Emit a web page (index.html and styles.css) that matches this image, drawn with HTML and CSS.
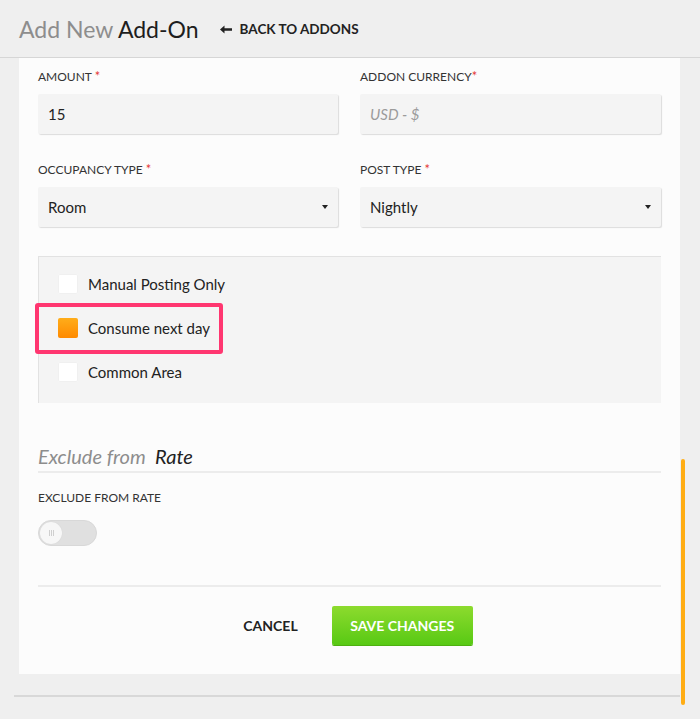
FILE: index.html
```html
<!DOCTYPE html>
<html>
<head>
<meta charset="utf-8">
<link rel="stylesheet" href="styles.css">
</head>
<body>
<header class="topbar">
  <h1 class="title"><span class="muted">Add New</span> Add-On</h1>
  <a class="back"><svg class="arrow" width="12" height="9" viewBox="0 0 12 9"><path d="M0 4.5 L4.5 0.5 L4.5 3.2 L12 3.2 L12 5.8 L4.5 5.8 L4.5 8.5 Z" fill="#222"/></svg>BACK TO ADDONS</a>
</header>
<main class="card">
  <div class="grid">
    <div class="field">
      <label class="lbl">AMOUNT <span class="req">*</span></label>
      <div class="input">15</div>
    </div>
    <div class="field">
      <label class="lbl">ADDON CURRENCY<span class="req">*</span></label>
      <div class="input placeholder">USD - $</div>
    </div>
    <div class="field">
      <label class="lbl">OCCUPANCY TYPE <span class="req">*</span></label>
      <div class="input select">Room<span class="caret"></span></div>
    </div>
    <div class="field">
      <label class="lbl">POST TYPE <span class="req">*</span></label>
      <div class="input select">Nightly<span class="caret"></span></div>
    </div>
  </div>
  <div class="checks">
    <div class="check"><span class="box"></span>Manual Posting Only</div>
    <div class="check highlight"><span class="box on"></span>Consume next day</div>
    <div class="check"><span class="box"></span>Common Area</div>
  </div>
  <h2 class="section"><span class="muted">Exclude from</span>&nbsp; Rate</h2>
  <label class="lbl">EXCLUDE FROM RATE</label>
  <div class="toggle"><span class="knob"><i></i><i></i><i></i></span></div>
  <div class="actions">
    <button class="btn-cancel">CANCEL</button>
    <button class="btn-save">SAVE CHANGES</button>
  </div>
</main>
<div class="footline"></div>
<div class="scrollbar"></div>
</body>
</html>
```
FILE: styles.css
```css
*, *::before, *::after { box-sizing: border-box; }
html, body { margin: 0; padding: 0; }
body {
  width: 700px;
  height: 719px;
  overflow: hidden;
  background: #efefef;
  font-family: "Source Sans Pro", Lato, "Liberation Sans", sans-serif;
  color: #222;
  position: relative;
}
.topbar {
  height: 58px;
  padding-left: 19px;
  display: flex;
  align-items: center;
  border-bottom: 1px solid #d6d6d6;
}
.title {
  margin: 0;
  font-size: 23px;
  font-weight: 400;
  color: #1e1e1e;
}
.muted { color: #8d8d8d; }
.back {
  margin-left: 21px;
  font-size: 13.5px;
  font-weight: 700;
  color: #222;
  display: flex;
  align-items: center;
  gap: 8px;
}
.arrow { display: block; margin-top: 1px; }
.card {
  margin: 0 20px 0 19px;
  background: #fcfcfc;
  padding: 11px 19px 29px 19px;
}
.grid {
  display: grid;
  grid-template-columns: 300px 301px;
  column-gap: 22px;
  row-gap: 28px;
}
.field { display: flex; flex-direction: column; }
.lbl {
  display: block;
  font-size: 12px;
  line-height: 16px;
  height: 16px;
  color: #333;
  margin-bottom: 9px;
}
.req { color: #e53935; font-size: 13px; line-height: 0; }
.input {
  height: 40px;
  background: #f4f4f4;
  border-radius: 2px;
  box-shadow: 1px 1px 1px #dcdcdc;
  display: flex;
  align-items: center;
  padding: 0 10px;
  font-size: 15px;
  color: #222;
}
.placeholder { color: #9b9b9b; font-style: italic; }
.select { justify-content: space-between; }
.caret {
  width: 0; height: 0;
  border-left: 3px solid transparent;
  border-right: 3px solid transparent;
  border-top: 4px solid #222;
}
.checks {
  margin-top: 29px;
  background: #f4f4f4;
  border-top: 1px solid #e2e2e2;
  border-left: 1px solid #e2e2e2;
  padding: 17px 0 19px 19px;
  display: flex;
  flex-direction: column;
  gap: 24px;
  height: 147px;
}
.check {
  display: flex;
  align-items: center;
  gap: 10px;
  font-size: 15px;
  color: #222;
  height: 20px;
  position: relative;
}
.box {
  width: 20px; height: 20px;
  background: #fff;
  border-radius: 2px;
  box-shadow: inset 0 0 0 1px #f0f0f0;
}
.box.on {
  background: linear-gradient(#ffad1a, #ff8a00);
  box-shadow: none;
}
.highlight::after {
  content: "";
  position: absolute;
  left: -23px;
  top: -15px;
  width: 188px;
  height: 51px;
  border: 4px solid #ff3670;
  border-radius: 3px;
}
.section {
  margin: 40px 0 0 0;
  font-size: 20px;
  font-weight: 400;
  font-style: italic;
  color: #222;
  padding-bottom: 2px;
  border-bottom: 2px solid #ececec;
  line-height: 26px;
}
.section + .lbl { margin-top: 17px; margin-bottom: 14px; }
.toggle {
  width: 59px; height: 26px;
  border-radius: 13px;
  background: #e0e0e0;
  border: 1px solid #d8d8d8;
  padding: 1px;
}
.knob {
  width: 22px; height: 22px;
  border-radius: 50%;
  background: #f7f7f7;
  display: flex;
  align-items: center;
  justify-content: center;
  gap: 1px;
  box-shadow: 0 0 1px #ccc;
}
.knob i {
  display: block;
  width: 1px; height: 6px;
  background: #cfcfcf;
}
.actions {
  margin-top: 39px;
  border-top: 2px solid #ececec;
  padding-top: 19px;
  display: flex;
  justify-content: center;
  align-items: center;
  gap: 34px;
  padding-left: 17px;
}
button {
  font-family: inherit;
  border: none;
  cursor: pointer;
  padding: 0;
}
.btn-cancel {
  background: none;
  font-size: 14px;
  font-weight: 700;
  color: #222;
}
.btn-save {
  height: 39px;
  width: 141px;
  background: linear-gradient(#8ddb2e, #58c914);
  color: #fff;
  font-size: 14px;
  font-weight: 700;
  border-radius: 2px;
  box-shadow: 0 1px 0 #4fb010;
}
.footline {
  margin: 21px 20px 0 14px;
  height: 2px;
  background: #d8d8d8;
}
.scrollbar {
  position: absolute;
  left: 681px;
  top: 459px;
  width: 4px;
  height: 246px;
  border-radius: 2px;
  background: #ffad14;
}
```
